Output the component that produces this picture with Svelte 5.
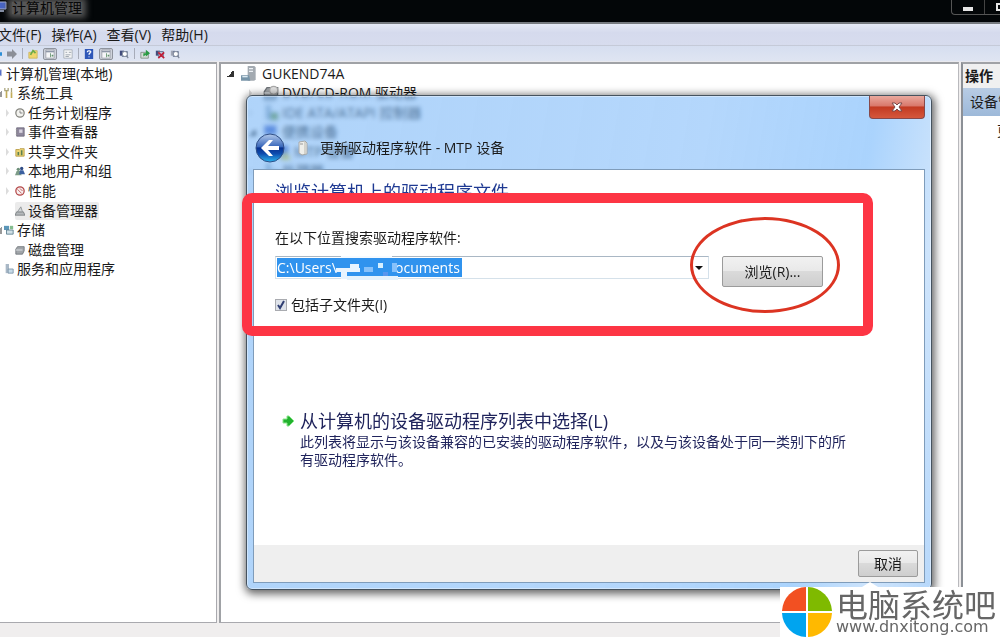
<script>
  const menus = ['文件(F)', '操作(A)', '查看(V)', '帮助(H)'];

  const tools = [
    { name: 'back', label: '后退' },
    { name: 'forward', label: '前进' },
    { name: 'sep' },
    { name: 'folder', label: '上一级' },
    { name: 'panel', label: '显示控制台树', framed: true },
    { name: 'sheet', label: '属性' },
    { name: 'sep' },
    { name: 'help', label: '帮助' },
    { name: 'panel', label: '显示操作窗格', framed: true },
    { name: 'scan', label: '扫描硬件改动' },
    { name: 'sep' },
    { name: 'update', label: '更新驱动程序' },
    { name: 'remove', label: '卸载' },
    { name: 'disable', label: '禁用' }
  ];

  const consoleTree = [
    { text: '计算机管理(本地)', icon: 'computer', level: 0 },
    { text: '系统工具', icon: 'tools', level: 1, open: true },
    { text: '任务计划程序', icon: 'clock', level: 2, closed: true },
    { text: '事件查看器', icon: 'book', level: 2, closed: true },
    { text: '共享文件夹', icon: 'share', level: 2, closed: true },
    { text: '本地用户和组', icon: 'users', level: 2, closed: true },
    { text: '性能', icon: 'gauge', level: 2, closed: true },
    { text: '设备管理器', icon: 'device', level: 2, selected: true },
    { text: '存储', icon: 'storage', level: 1, open: true },
    { text: '磁盘管理', icon: 'disk', level: 2 },
    { text: '服务和应用程序', icon: 'services', level: 1, closed: true }
  ];

  const devices = [
    { text: 'GUKEND74A', icon: 'tower', level: 0, open: true },
    { text: 'DVD/CD-ROM 驱动器', icon: 'disc', level: 1, closed: true },
    { text: 'IDE ATA/ATAPI 控制器', icon: 'ide', level: 1, closed: true },
    { text: '便携设备', icon: 'portable', level: 1, open: true },
    { text: 'MTP 设备', icon: 'warn', level: 2 },
    { text: '处理器', icon: 'cpu', level: 1, closed: true }
  ];

  let path = $state('C:\\Users\\' + '\u00a0'.repeat(16) + 'ocuments');
  let includeSub = $state(true);
</script>

{#snippet icon(name)}
  <svg class="icon" viewBox="0 0 12 12" aria-hidden="true">
    {#if name === 'back' || name === 'forward'}
      <path d={name === 'back' ? 'M0 6l5-5v3h7v4H5v3z' : 'M12 6L6 0v3H0v6h6v3z'} fill={name === 'back' ? '#2d8fd6' : '#8b8f98'} />
    {:else if name === 'folder'}
      <path d="M1 4h4l1-2h5v9H1z" fill="#f0d66b" stroke="#c9b560" />
      <path d="M3 7l3-5 3 3" fill="none" stroke="#6cab48" stroke-width="2" />
    {:else if name === 'panel'}
      <path d="M1 1h10v10H1z" fill="#f5f6f8" stroke="#9a9fa8" />
      <path d="M1 2h10v2H1z" fill="#8e97a8" />
      <path d="M6 5h1v5H6zM8 7h2v2H8z" fill="#60906a" />
    {:else if name === 'sheet'}
      <path d="M1 1h10v10H1z" fill="#f4f5f6" stroke="#a4abb5" />
      <path d="M3 4h2M7 4h3M3 7h6M3 9h4" stroke="#929aa5" />
    {:else if name === 'help'}
      <path d="M1 0h10v12H1z" fill="#2e57b8" />
      <path d="M4 4c0-3 5-2 4 0-1 1-2 1-2 3M6 9v1" fill="none" stroke="#fff" stroke-width="1.5" />
    {:else if name === 'scan' || name === 'remove' || name === 'disable'}
      <path d="M1 2h5v6H1z" fill={name === 'disable' ? '#a2a7b6' : '#414b7c'} />
      <path d="M4 3h6v6H4z" fill="#b8c4d9" stroke="#5d6b8b" />
      {#if name === 'remove'}
        <path d="M4 4l7 7M11 4l-7 7" stroke="#c11d36" stroke-width="2" />
      {:else}
        <circle cx="7" cy="6" r="3" fill="#fff" stroke="#7e8798" />
        <path d="M9 8l2 3" stroke="#7e8798" stroke-width="1.5" />
      {/if}
    {:else if name === 'users'}
      <circle cx="4" cy="4" r="2" fill="#6d8f79" />
      <path d="M0 11l2-5h4l2 5z" fill="#7d9c88" />
      <circle cx="8" cy="3" r="2" fill="#2f4c86" />
      <path d="M5 10l1-5h4l2 5z" fill="#3b5f9f" />
    {:else if name === 'update'}
      <path d="M1 4h9v7H1z" fill="#d6ded8" stroke="#7d8b80" />
      <path d="M4 9V5h3V1l5 4-5 4V7z" fill="#299a43" />
    {:else if name === 'computer' || name === 'portable' || name === 'warn'}
      <path d="M1 1h9v7H1z" fill="#4865c7" stroke="#a9b4d9" />
      <path d="M4 9h4v2H3z" fill="#8590a7" />
      {#if name === 'warn'}<path d="M8 5l4 7H4z" fill="#e8d23c" />{/if}
    {:else if name === 'tools'}
      <path d="M3 3v9M9 5v7" stroke="#c3ad59" stroke-width="2" />
      <path d="M1 0v3h4V0M9 0v5" fill="none" stroke="#a9a47c" stroke-width="1.5" />
    {:else if name === 'clock'}
      <circle cx="6" cy="6" r="5" fill="#f3f3ef" stroke="#85857f" stroke-width="1.5" />
      <path d="M6 3v3h3" fill="none" stroke="#777" />
    {:else if name === 'book'}
      <path d="M2 1h9v10H2z" fill="#8f889d" stroke="#6b6779" />
      <path d="M5 3h4v4H5z" fill="#d9d4e0" />
      <path d="M1 3h2M1 6h2M1 9h2" stroke="#999" />
    {:else if name === 'share'}
      <path d="M1 3h4l1-1h5v9H1z" fill="#ecd473" stroke="#b89a45" />
      <path d="M3 6h2v4H3zM7 4h2v6H7z" fill="#5d8052" />
    {:else if name === 'gauge'}
      <circle cx="6" cy="6" r="5" fill="#f7eeee" stroke="#b44747" stroke-width="1.5" />
      <path d="M3 4l5 5M6 3l3 3" stroke="#b95050" />
    {:else if name === 'device'}
      <path d="M0 11l2-4h8l2 4z" fill="#b4b8bb" stroke="#74797d" />
      <path d="M3 7l4-6 2 6z" fill="#d4d8da" stroke="#8b9094" />
    {:else if name === 'disk' || name === 'disc'}
      <path d="M1 5l2-3h8v5l-2 4H1z" fill="#a1a5a9" stroke="#6e7378" />
      <path d="M1 6h8" stroke="#e6eaed" />
      {#if name === 'disc'}<circle cx="8" cy="4" r="3" fill="#e0e0e0" stroke="#aaa" />{/if}
    {:else if name === 'storage'}
      <path d="M0 1h6v5H0z" fill="#5b96b8" />
      <path d="M3 6h8v5H3z" fill="#cfdfe6" stroke="#57788a" />
      <path d="M7 1h4v4H7z" fill="#84bd8d" />
    {:else if name === 'services' || name === 'ide' || name === 'cpu'}
      <path d="M2 0h4v11H2z" fill="#a9b8c6" />
      <path d="M5 6h6v5H5z" fill="#c7dbe8" stroke="#7890a5" />
      {#if name === 'ide'}<path d="M6 6h5v5H6z" fill="#7aa23c" />{/if}
    {:else if name === 'tower'}
      <path d="M5 0h5l1 1v9l-1 1H5z" fill="#a3aab1" />
      <path d="M6 2h3M6 4h3" stroke="#edf1f5" />
      <path d="M0 7h6l1 4H0z" fill="#7895a9" />
      <path d="M1 8h4" stroke="#dceaf2" />
    {/if}
  </svg>
{/snippet}

{#snippet node(item)}
  <span class="twisty" class:open={item.open} class:closed={item.closed}></span>
  <span class="node-label" class:selected={item.selected}>
    {@render icon(item.icon)}
    <span class="node-text">{item.text}</span>
  </span>
{/snippet}

<div class="desktop">
  <header class="titlebar">
    {@render icon('computer')}
    <h1>计算机管理</h1>
    <div class="window-buttons">
      <button aria-label="最小化"><i class="min"></i></button>
      <button aria-label="最大化"><i class="max"></i></button>
    </div>
  </header>

  <nav class="menubar">
    {#each menus as menu}
      <button>{menu}</button>
    {/each}
  </nav>

  <div class="toolbar">
    {#each tools as tool}
      {#if tool.name === 'sep'}
        <span class="sep"></span>
      {:else}
        <button class:framed={tool.framed} aria-label={tool.label}>{@render icon(tool.name)}</button>
      {/if}
    {/each}
  </div>

  <main class="panes">
    <section class="pane console">
      <ul class="tree">
        {#each consoleTree as item}
          <li class="level-{item.level}">{@render node(item)}</li>
        {/each}
      </ul>
    </section>

    <section class="pane devices">
      <ul class="tree">
        {#each devices as item}
          <li class="level-{item.level}">{@render node(item)}</li>
        {/each}
      </ul>
    </section>

    <aside class="pane actions">
      <h2>操作</h2>
      <div class="action-group">设备管理器</div>
      <a href="#more">更多操作</a>
    </aside>
  </main>

  <footer class="statusbar"></footer>

  <div class="dialog" role="dialog" aria-labelledby="dialog-title">
    <div class="dialog-head">
      <button class="back" aria-label="返回">
        <svg viewBox="0 0 30 30">
          <defs>
            <linearGradient id="orb" x1="0" y1="0" x2="0" y2="1">
              <stop offset="0" stop-color="#b4cbec" />
              <stop offset="0.45" stop-color="#3a68bb" />
              <stop offset="0.5" stop-color="#07318f" />
              <stop offset="0.7" stop-color="#0d4cae" />
              <stop offset="1" stop-color="#2bb4ee" />
            </linearGradient>
          </defs>
          <circle cx="15" cy="15" r="14" fill="url(#orb)" stroke="#304f86" />
          <path d="M6 15l8-8h4l-5 6h11v4H13l5 6h-4z" fill="#fff" />
        </svg>
      </button>
      <svg class="device-icon" viewBox="0 0 12 16" aria-hidden="true">
        <path d="M2 2l6-1 2 2v11l-5 1-3-2z" fill="#eeeeea" stroke="#a6a8a8" />
        <path d="M8 2v12" stroke="#b9b7ad" />
        <path d="M3 4h3" stroke="#999" />
      </svg>
      <span id="dialog-title">更新驱动程序软件 - MTP 设备</span>
      <button class="close" aria-label="关闭">
        <svg viewBox="0 0 12 10"><path d="M1 1h3l2 2 2-2h3L8 5l3 4H8L6 7 4 9H1l3-4z" fill="#fff" stroke="#7b4a4a" /></svg>
      </button>
    </div>

    <div class="dialog-body">
      <div class="content">
        <h2>浏览计算机上的驱动程序文件</h2>
        <label class="path-label" for="path">在以下位置搜索驱动程序软件:</label>
        <div class="path-row">
          <div class="combo">
            <input id="path" type="text" bind:value={path} />
            <svg class="mosaic" viewBox="0 0 66 25" aria-hidden="true">
              <path d="M9 0h51v2H9z" fill="#f5faff" />
              <path d="M4 12h24v4H4zM18 8h9v5h-9zM9 16h6v7H9z" fill="#e8f4ff" />
              <path d="M32 11h9v5h-9zM60 7h5v9h-5z" fill="#86c1fb" />
              <path d="M46 7h5v5h-5z" fill="#d5efff" />
              <path d="M51 16h5v4h-5z" fill="#5996ed" />
              <path d="M15 20h51v4H15z" fill="#e4f2fd" />
            </svg>
            <button class="drop" aria-label="展开列表"></button>
          </div>
          <button class="push browse">浏览(R)...</button>
        </div>
        <label class="check">
          <input type="checkbox" bind:checked={includeSub} />
          包括子文件夹(I)
        </label>
        <button class="command">
          <svg class="arrow" viewBox="0 0 12 12" aria-hidden="true">
            <path d="M1 4h4V1h2l5 5-5 5H5V8H1z" fill="#22b22e" stroke="#8ce68e" />
          </svg>
          <strong>从计算机的设备驱动程序列表中选择(L)</strong>
          <span>此列表将显示与该设备兼容的已安装的驱动程序软件，以及与该设备处于同一类别下的所有驱动程序软件。</span>
        </button>
      </div>
      <div class="dialog-foot">
        <button class="push">取消</button>
      </div>
    </div>

    <div class="mark-box"></div>
    <div class="mark-oval"></div>
  </div>

  <div class="watermark">
    <svg viewBox="0 0 50 50" aria-hidden="true">
      <path d="M24 0v24H0A25 25 0 0 1 24 0z" fill="#f25022" />
      <path d="M26 0v24h24A25 25 0 0 0 26 0z" fill="#7fba00" />
      <path d="M24 50V26H0a25 25 0 0 0 24 24z" fill="#00a4ef" />
      <path d="M26 50V26h24a25 25 0 0 1-24 24z" fill="#ffb900" />
    </svg>
    <div class="brand">
      <b>电脑系统吧</b>
      <span>www.dnxitong.com</span>
    </div>
  </div>
</div>

<style>
  :global(body) {
    margin: 0;
  }

  .desktop {
    position: relative;
    display: flex;
    flex-direction: column;
    min-height: 100vh;
    overflow: hidden;
    background: #f0eeee;
    color: #1a1a1a;
    font: 14px/20px "Open Sans", "Noto Sans CJK SC", sans-serif;
    white-space: nowrap;
  }

  button {
    margin: 0;
    padding: 0;
    border: 0;
    background: none;
    color: inherit;
    font: inherit;
  }

  h1, h2, ul {
    margin: 0;
    padding: 0;
    font-size: 14px;
    font-weight: 400;
  }

  .icon {
    flex: none;
    width: 10px;
    height: 10px;
  }

  /* Main window */
  .titlebar {
    display: flex;
    align-items: flex-start;
    gap: 4px;
    height: 22px;
    border-bottom: 2px solid #777b80;
    background: #030608;
  }

  .titlebar .icon {
    width: 12px;
    height: 14px;
    margin-left: -4px;
  }

  .titlebar h1 {
    height: 12px;
    margin-top: 2px;
    background: #565656;
    box-shadow: 0 0 6px 4px #565656;
    color: #080808;
    line-height: 12px;
  }

  .window-buttons {
    display: flex;
    height: 14px;
    margin-left: auto;
    border: 1px solid #555;
    border-width: 0 0 1px 1px;
    border-radius: 0 0 0 4px;
  }

  .window-buttons button {
    width: 32px;
    padding-top: 3px;
    padding-left: 11px;
    overflow: hidden;
    text-align: left;
  }

  .window-buttons button + button {
    width: 16px;
    padding-top: 0;
    border-left: 1px solid #444;
  }

  .window-buttons i {
    display: block;
    box-sizing: border-box;
    width: 10px;
    height: 4px;
    background: #e5e5e5;
  }

  .window-buttons .max {
    height: 8px;
    border: 2px solid #e5e5e5;
    background: none;
  }

  .menubar {
    display: flex;
    gap: 10px;
    height: 21px;
    border-bottom: 1px solid #c5cad8;
    background: linear-gradient(#e6eaf6, #d5daed 40%, #d7dcee);
  }

  .menubar button:first-child {
    margin-left: -2px;
  }

  .toolbar {
    display: flex;
    align-items: center;
    gap: 5px;
    height: 15px;
    border-bottom: 1px solid #e9e9ee;
    background: linear-gradient(#d6def0, #dfe5f2);
  }

  .toolbar button {
    display: flex;
  }

  .toolbar button:first-child {
    margin-left: -8px;
  }

  .toolbar .framed {
    padding: 0 1px;
    border: 1px solid #8f949e;
    border-radius: 2px;
    background: #cfd3dc;
  }

  .toolbar .framed + button {
    margin-left: 1px;
  }

  .sep {
    width: 1px;
    height: 11px;
    background: #a7acb9;
  }

  .panes {
    flex: 1;
    display: grid;
    grid-template-columns: 217px minmax(0, 1fr) 39px;
    gap: 2px;
  }

  .pane {
    min-width: 0;
    overflow: hidden;
    border-top: 2px solid #a0a2a6;
    border-bottom: 1px solid #a9a9ae;
    background: #fff;
  }

  .console {
    border-right: 1px solid #a9a9ae;
  }

  .devices {
    border-left: 2px solid #a0a2a6;
    border-right: 1px solid #b9b9bd;
  }

  .tree {
    display: grid;
    grid-auto-rows: 1fr;
    list-style: none;
  }

  .tree li {
    display: flex;
    align-items: center;
    min-height: 0;
  }

  .console .tree {
    height: 215px;
    margin-left: -16px;
  }

  .devices .tree {
    height: 117px;
    padding-left: 6px;
  }

  .twisty {
    flex: none;
    box-sizing: border-box;
    width: 7px;
    height: 7px;
    margin-right: 2px;
  }

  .closed {
    border: 4px solid transparent;
    border-right: 0;
    border-left: 3px solid #dcdcdc;
  }

  .open {
    background: linear-gradient(135deg, transparent 50%, #333 50%);
  }

  .console .open {
    background: linear-gradient(135deg, transparent 50%, #999 50%);
  }

  .node-label {
    display: flex;
    align-items: center;
  }

  .node-text {
    padding: 0 1px 0 3px;
    line-height: 18px;
  }

  .selected {
    border-radius: 2px;
    background: #ebebeb;
  }

  .console .level-1 { padding-left: 11px; }
  .console .level-2 { padding-left: 22px; }
  .devices .level-1 { padding-left: 22px; }
  .devices .level-2 { padding-left: 34px; }

  .devices .icon {
    width: 16px;
    height: 16px;
    margin-left: 5px;
  }

  .devices .level-0 .node-text {
    padding-left: 5px;
  }

  .actions {
    border-left: 2px solid #8c9096;
  }

  .actions h2 {
    height: 24px;
    padding-left: 2px;
    background: #f0f0f0;
    font-weight: 700;
    line-height: 24px;
  }

  .action-group {
    padding: 4px 0 4px 7px;
    background: linear-gradient(#b8cce4, #9db9d9);
  }

  .actions a {
    display: block;
    padding: 5px 0 0 34px;
    color: #1a1a1a;
    text-decoration: none;
  }

  .statusbar {
    height: 14px;
  }

  /* Driver wizard */
  .dialog {
    position: absolute;
    top: 95px;
    left: 246px;
    right: 68px;
    box-sizing: border-box;
    padding: 0 6px 6px;
    border: 1px solid #46535f;
    border-radius: 6px;
    background: linear-gradient(100deg, rgba(110, 176, 245, 0.55), rgba(130, 188, 250, 0.6) 60%, rgba(125, 188, 252, 0.65) 82%, rgba(180, 214, 250, 0.65) 92%, rgba(135, 190, 248, 0.6));
    backdrop-filter: blur(2px);
    box-shadow: 1px 2px 8px 2px rgba(0, 0, 0, 0.6), inset 0 0 0 1px rgba(255, 255, 255, 0.4);
  }

  .dialog-head {
    display: flex;
    align-items: center;
    height: 73px;
  }

  .back,
  .device-icon,
  #dialog-title {
    margin-top: 30px;
  }

  .back {
    width: 30px;
    height: 30px;
    margin-left: 2px;
  }

  .device-icon {
    width: 12px;
    height: 16px;
    margin-right: 11px;
    margin-left: 12px;
  }

  .close {
    display: flex;
    align-items: center;
    justify-content: center;
    align-self: flex-start;
    width: 56px;
    height: 23px;
    margin-left: auto;
    border: 1px solid #87494a;
    border-top: 0;
    border-radius: 0 0 4px 4px;
    background: linear-gradient(#e9a99e, #d9786b 45%, #c23a22 50%, #d5573c);
  }

  .close svg {
    width: 12px;
    height: 10px;
  }

  .dialog-body {
    border: 1px solid #7f9cba;
    background: #fff;
  }

  .content {
    padding: 10px 21px 0;
    min-height: 365px;
  }

  .content h2 {
    color: #1f3a93;
    font-size: 18px;
    line-height: 24px;
  }

  .path-label {
    display: block;
    margin: 24px 0 8px;
  }

  .path-row {
    display: flex;
    align-items: flex-start;
    gap: 13px;
    margin-right: 80px;
  }

  .combo {
    position: relative;
    flex: 1;
    display: flex;
    box-sizing: border-box;
    height: 23px;
    border: 1px solid #d5e1ea;
    border-top-color: #a9b7c4;
  }

  .combo input {
    box-sizing: border-box;
    width: 185px;
    height: 19px;
    margin: 1px;
    padding: 0;
    border: 0;
    background: #3093ee;
    color: #fff;
    font: inherit;
  }

  .mosaic {
    position: absolute;
    top: -1px;
    left: 56px;
    width: 66px;
    height: 25px;
  }

  .drop {
    width: 18px;
    margin-left: auto;
  }

  .drop::before {
    content: '';
    display: block;
    width: 0;
    margin: 0 auto;
    border: 4px solid transparent;
    border-top-color: #111;
    border-bottom: 0;
  }

  .push {
    box-sizing: border-box;
    border: 1px solid #9b9b9b;
    border-radius: 2px;
    background: linear-gradient(#f1f1f1, #e9e9e9 48%, #dadada 50%, #cecece);
  }

  .browse {
    width: 101px;
    height: 31px;
  }

  .check {
    display: flex;
    align-items: center;
    gap: 4px;
    width: max-content;
    margin-top: 8px;
  }

  .check input {
    appearance: none;
    box-sizing: border-box;
    width: 12px;
    height: 12px;
    margin: 0;
    border: 1px solid #a9abb0;
    background: #dfe3ea;
  }

  .check input:checked {
    background: #dfe3ea url("data:image/svg+xml,%3Csvg xmlns='http://www.w3.org/2000/svg' viewBox='0 0 10 10'%3E%3Cpath d='M2 5l2 3 4-7' fill='none' stroke='%23303f73' stroke-width='2'/%3E%3C/svg%3E");
  }

  .command {
    display: grid;
    grid-template-columns: 12px minmax(0, 1fr);
    column-gap: 6px;
    margin: 94px 56px 0 7px;
    color: #20245c;
    text-align: left;
  }

  .arrow {
    width: 12px;
    height: 12px;
    align-self: center;
  }

  .command strong {
    font-size: 18px;
    font-weight: 400;
    line-height: 24px;
  }

  .command span {
    grid-column: 2;
    line-height: 18px;
    white-space: normal;
  }

  .dialog-foot {
    display: flex;
    justify-content: flex-end;
    padding: 5px 6px;
    background: #efefef;
  }

  .dialog-foot .push {
    width: 60px;
    height: 27px;
  }

  /* Annotations over the wizard */
  .mark-box {
    position: absolute;
    top: 97px;
    left: -5px;
    right: 58px;
    box-sizing: border-box;
    height: 143px;
    border: 10px solid #fd3544;
    border-radius: 10px;
    pointer-events: none;
  }

  .mark-oval {
    position: absolute;
    top: 121px;
    right: 91px;
    box-sizing: border-box;
    width: 150px;
    height: 96px;
    border: 3px solid #dc3422;
    border-radius: 50%;
    pointer-events: none;
  }

  .watermark {
    position: absolute;
    right: 0;
    bottom: 0;
    display: flex;
    gap: 4px;
    box-sizing: border-box;
    width: 220px;
    height: 50px;
    padding-left: 2px;
    background: #fff;
  }

  .watermark::before {
    content: '';
    position: absolute;
    top: -5px;
    left: 82px;
    border: 8px solid transparent;
    border-top: 0;
    border-bottom: 5px solid #fff;
  }

  .watermark svg {
    flex: none;
    width: 50px;
    height: 50px;
  }

  .brand {
    display: flex;
    flex-direction: column;
    color: #666;
  }

  .brand b {
    font-family: "Noto Sans CJK SC", sans-serif;
    font-size: 32px;
    font-weight: 400;
    line-height: 32px;
  }

  .brand span {
    font-family: "DejaVu Sans", sans-serif;
    font-size: 16px;
    line-height: 16px;
  }
</style>
